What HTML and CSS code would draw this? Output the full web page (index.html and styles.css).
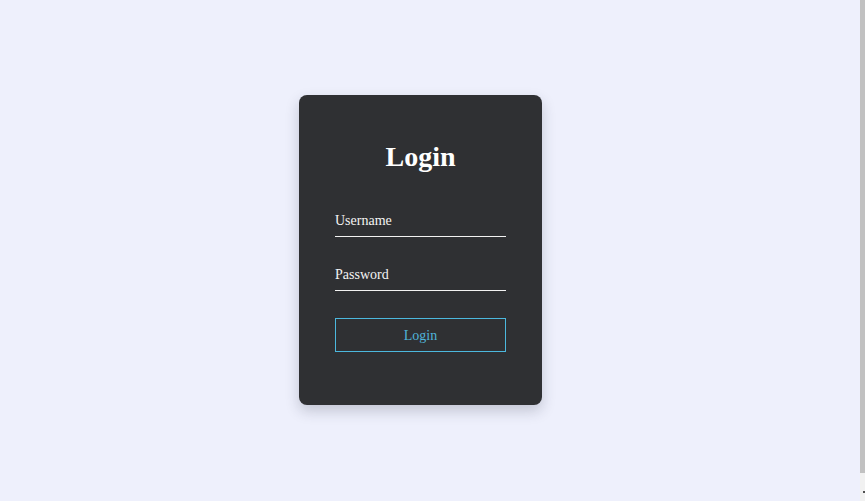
FILE: index.html
```html
<!DOCTYPE html>
<html lang="en">
<head>
<meta charset="utf-8">
<title>Login</title>
<link rel="stylesheet" href="styles.css">
</head>
<body>
<div class="page">
  <main class="stage">
    <form class="card">
      <h2 class="title">Login</h2>
      <div class="field field-user"><span class="label">Username</span></div>
      <div class="field field-pass"><span class="label">Password</span></div>
      <button type="button" class="btn">Login</button>
    </form>
  </main>
  <div class="scrollbar">
    <div class="thumb"></div>
    <div class="track"><span class="arrow"></span></div>
  </div>
</div>
</body>
</html>
```
FILE: styles.css
```css
html, body {
  margin: 0;
  padding: 0;
  height: 100%;
  overflow: hidden;
}
body {
  background: #eef0fc;
  font-family: "Liberation Serif", "Times New Roman", serif;
}
.page {
  display: flex;
  height: 501px;
}
.stage {
  flex: 1;
  display: flex;
  align-items: center;
  justify-content: center;
  padding-right: 19px;
  padding-bottom: 1px;
}
.card {
  width: 171px;
  height: 211px;
  padding: 48px 36px 51px;
  background: #2f3033;
  border-radius: 8px;
  box-shadow: 0 6px 14px rgba(40, 44, 70, 0.22);
  display: flex;
  flex-direction: column;
}
.title {
  margin: 0;
  font-size: 28px;
  line-height: 28px;
  font-weight: bold;
  color: #ffffff;
  text-align: center;
}
.field {
  border-bottom: 1px solid #f2f2f2;
  box-sizing: border-box;
  height: 25px;
  padding-bottom: 6px;
}
.field-user { margin-top: 41px; }
.field-pass { margin-top: 29px; }
.label {
  display: block;
  font-size: 14px;
  line-height: 18px;
  color: #f4f4f4;
}
.btn {
  margin-top: 27px;
  height: 34px;
  width: 171px;
  background: transparent;
  border: 1px solid #4cb8de;
  color: #4fb4d9;
  font-family: "Liberation Serif", "Times New Roman", serif;
  font-size: 14px;
  line-height: 18px;
  padding: 2px 0 0;
}
.scrollbar {
  width: 5px;
  display: flex;
  flex-direction: column;
}
.thumb {
  height: 473px;
  background: #c1c1c1;
}
.track {
  flex: 1;
  background: #f1f1f1;
  display: flex;
  justify-content: flex-end;
  padding-top: 18px;
}
.arrow {
  width: 2px;
  height: 2px;
  background: #505050;
}
```
